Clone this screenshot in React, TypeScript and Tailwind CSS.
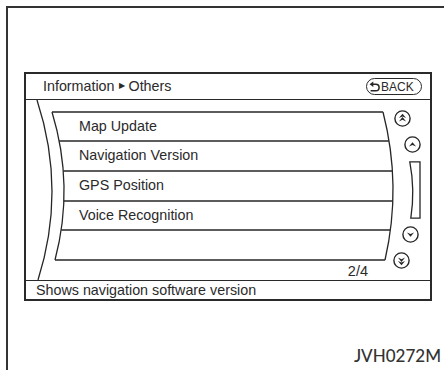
import React from 'react'

const ink = '#262626'

function ScrollCircle({ dir, double }: { dir: 'up' | 'down'; double?: boolean }) {
  // arrowhead pointing up, flipped for down
  const head = (dy: number) => (
    <path
      d={`M4.9,${10.2 + dy} L8.5,${5.9 + dy} L12.1,${10.2 + dy} L8.5,${8.6 + dy} Z`}
      fill={ink}
    />
  )
  return (
    <svg width="17" height="17" viewBox="0 0 17 17" className="block">
      <circle cx="8.5" cy="8.5" r="7.6" fill="white" stroke={ink} strokeWidth="1.4" />
      <g transform={dir === 'down' ? 'rotate(180 8.5 8.5)' : undefined}>
        {double ? (
          <>
            {head(-2.2)}
            {head(1.2)}
          </>
        ) : (
          head(0.3)
        )}
      </g>
    </svg>
  )
}

function BackIcon() {
  return (
    <svg width="11" height="11" viewBox="0 0 11 11" className="block">
      <path d="M3,3.2 H6.8 A3.3,3.3 0 0 1 6.8,9.8 H1.6" fill="none" stroke={ink} strokeWidth="1.5" />
      <path d="M0.5,3.2 L4.3,0.4 L4.3,6 Z" fill={ink} />
    </svg>
  )
}

const rows = ['Map Update', 'Navigation Version', 'GPS Position', 'Voice Recognition', '']
const rowHeights = ['h-[29px]', 'h-[30px]', 'h-[30px]', 'h-[29px]', 'h-[30px]']

export default function App() {
  return (
    <div
      className="w-[444px] h-[370px] bg-white overflow-hidden pt-[6px] pl-[6px] text-[#2a2a2a]"
      style={{ fontFamily: '"Liberation Sans", Arial, sans-serif' }}
    >
      <div className="h-full flex flex-col border-t-2 border-l-2 border-[#333]">
        {/* ── SCREEN ── */}
        <div className="ml-[16px] mt-[64px] w-[408px] h-[229px] border-2 border-[#2a2a2a] flex flex-col">
          {/* header */}
          <div className="h-[26px] shrink-0 border-b border-[#2a2a2a] flex items-center justify-between pl-[17px] pr-[8px]">
            <span className="text-[14.3px] leading-none flex items-center">
              Information
              <span className="text-[8px] mx-[4px]">▶</span>
              Others
            </span>
            <span className="h-[17px] w-[56px] border-[1.5px] border-[#2a2a2a] rounded-full flex items-center pl-[2px] gap-[1px]">
              <BackIcon />
              <span className="text-[12px] leading-none">BACK</span>
            </span>
          </div>

          {/* list */}
          <div className="relative h-[180px] shrink-0 flex">
            <svg
              className="absolute inset-0"
              width="404"
              height="180"
              viewBox="26 99 404 180"
              fill="none"
              stroke={ink}
              strokeWidth="1.3"
            >
              <path d="M37,99 Q66.5,189 38,279" />
              <path d="M52,111 Q74.5,185 55,259" />
              <path d="M383,111 Q402,185 385,259" />
              <path d="M52,111 H383" />
              <path d="M59.2,140 H388.8" />
              <path d="M63.3,170 H392.3" />
              <path d="M63.9,200 H392.7" />
              <path d="M61.2,229 H390.4" />
              <path d="M55,259 H385" />
            </svg>

            <div className="relative flex-1 flex flex-col pt-[12px]">
              {rows.map((r, i) => (
                <div key={i} className={`${rowHeights[i]} pl-[53px] flex items-center text-[14.3px]`}>
                  {r}
                </div>
              ))}
              <div className="text-right pr-[24px] pt-[3px] text-[14.5px] leading-[16px]">2/4</div>
            </div>

            <div className="relative w-[38px] shrink-0 flex flex-col items-start">
              <div className="ml-[2px] mt-[10px]">
                <ScrollCircle dir="up" double />
              </div>
              <div className="ml-[12px] mt-[9px]">
                <ScrollCircle dir="up" />
              </div>
              <div className="ml-[17px] mt-[8px]">
                <svg width="12" height="58" viewBox="0 0 12 58" className="block">
                  <path
                    d="M0.8,0.8 L11,0.8 L11,57.2 L1.8,57.2 Q6.2,29 0.8,0.8 Z"
                    fill="white"
                    stroke={ink}
                    strokeWidth="1.3"
                  />
                </svg>
              </div>
              <div className="ml-[10px] mt-[7px]">
                <ScrollCircle dir="down" />
              </div>
              <div className="ml-[1px] mt-[9px]">
                <ScrollCircle dir="down" double />
              </div>
            </div>
          </div>

          {/* status */}
          <div className="flex-1 border-t border-[#2a2a2a] flex items-center pl-[10px] text-[14.3px] leading-none">
            Shows navigation software version
          </div>
        </div>

        {/* ── CODE ── */}
        <div className="flex justify-end pr-[3px] mt-[46px]">
          <span
            className="text-[17px] leading-none font-medium text-[#333]"
            style={{ fontFamily: 'Lato, "Liberation Sans", sans-serif' }}
          >
            JVH0272M
          </span>
        </div>
      </div>
    </div>
  )
}
